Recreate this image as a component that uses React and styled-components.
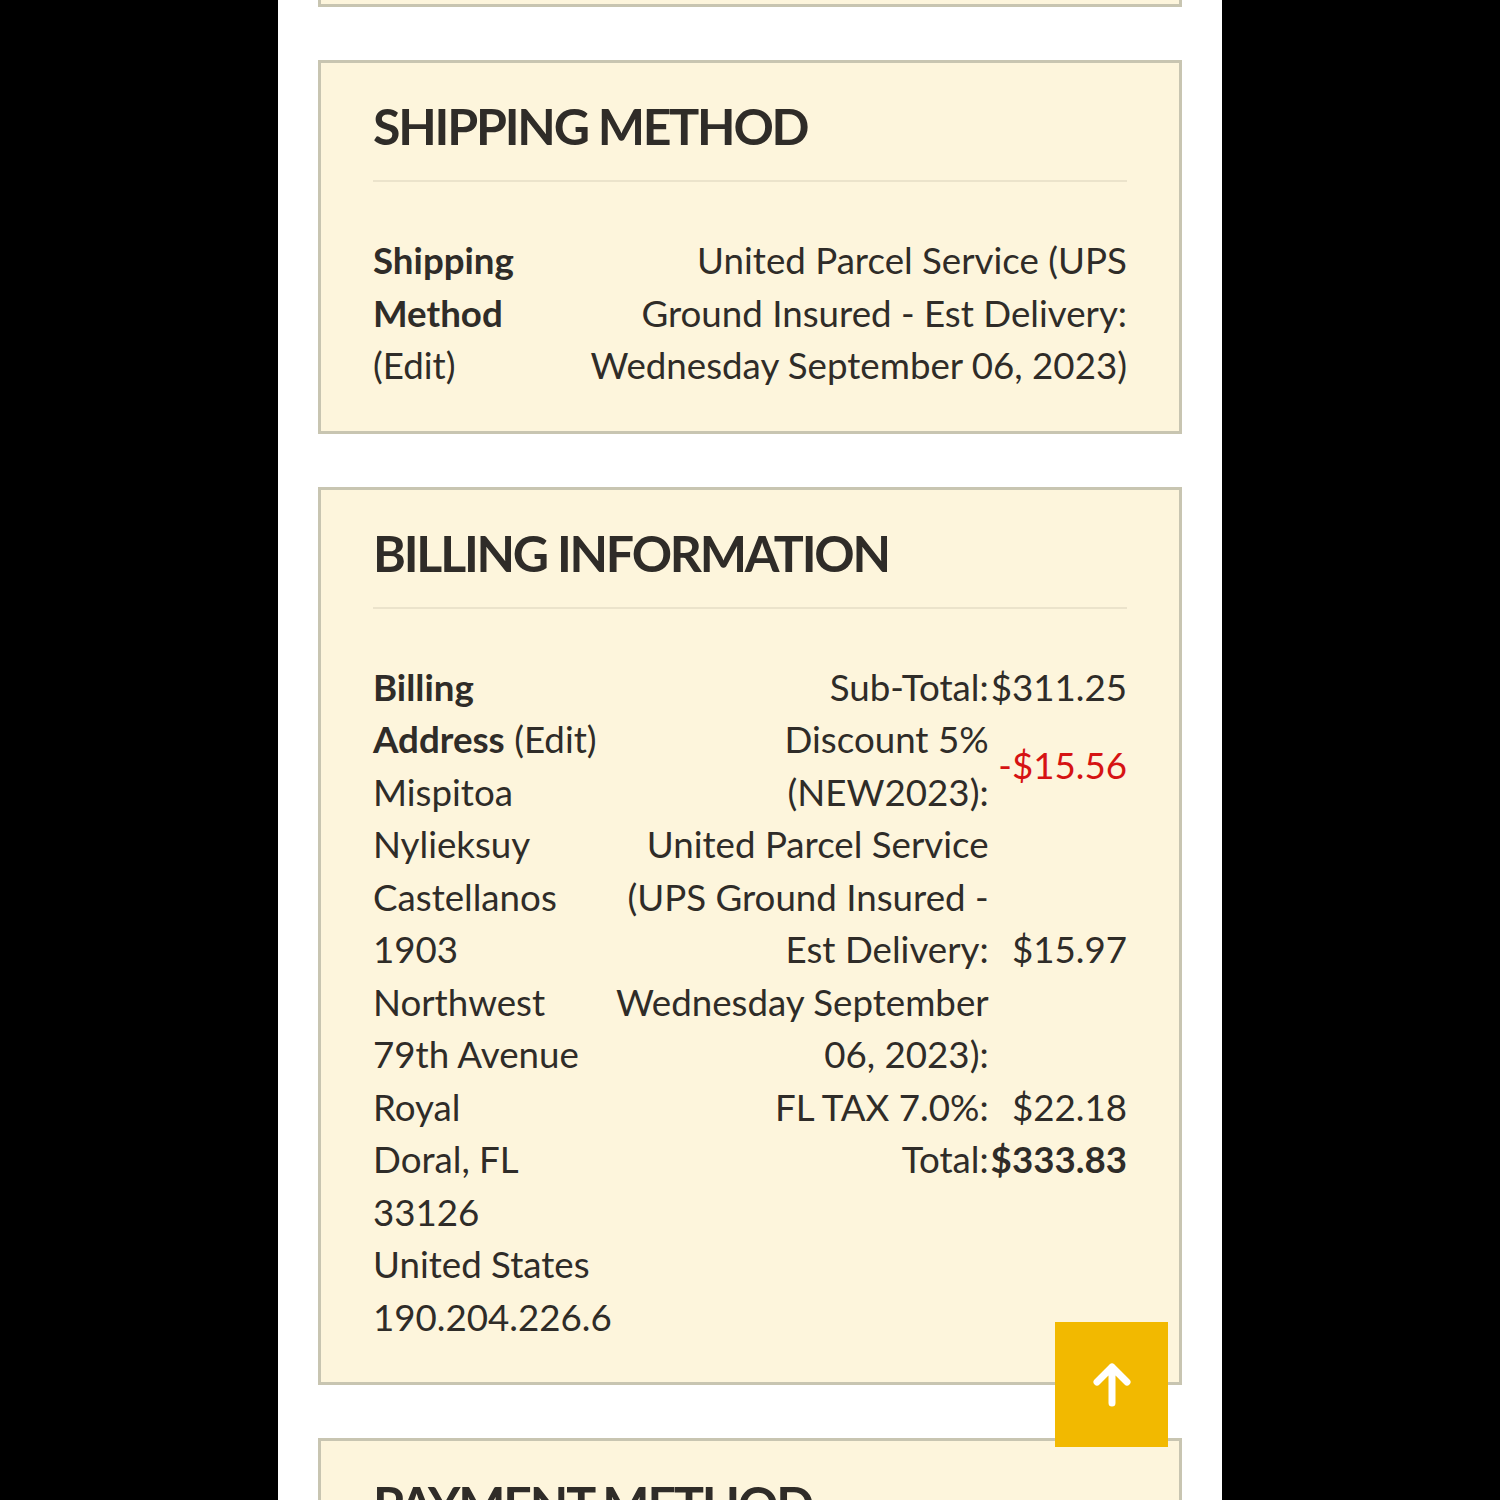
import React from "react";
import styled, { createGlobalStyle } from "styled-components";

const GlobalStyle = createGlobalStyle`
  html, body {
    margin: 0;
    padding: 0;
    background: #000;
  }
  body {
    font-family: Lato, "Open Sans", sans-serif;
    color: #2f2c28;
    overflow: hidden;
  }
`;

const Page = styled.div`
  width: 944px;
  height: 1500px;
  margin: 0 auto;
  background: #fff;
  overflow: hidden;
  display: flex;
  flex-direction: column;
  gap: 53px;
  padding: 0 40px;
  box-sizing: border-box;
`;

const Card = styled.section`
  flex-shrink: 0;
  background: #fdf5dc;
  border: 3px solid #c8c5b1;
  padding: 33px 52px 39px;
  box-sizing: border-box;
`;

const CardTail = styled(Card)`
  height: 7px;
  padding: 0;
  border-top: none;
`;

const Heading = styled.h2`
  margin: 0;
  font-size: 50px;
  line-height: 1.2;
  font-weight: 700;
  letter-spacing: -2.2px;
  text-transform: uppercase;
  padding-bottom: 24px;
  border-bottom: 2px solid #ebe3cb;
  margin-bottom: 52px;
`;

const Body = styled.div`
  font-size: 36.7px;
  line-height: 52.5px;
`;

const ShipRow = styled(Body)`
  display: grid;
  grid-template-columns: 210px 1fr;
`;

const Label = styled.span`
  font-weight: 700;
`;

const Value = styled.div`
  text-align: right;
`;

const BillRow = styled(Body)`
  display: grid;
  grid-template-columns: 237px 1fr;
`;

const Address = styled.div`
  display: flex;
  flex-direction: column;
`;

const Totals = styled.div`
  display: grid;
  grid-template-columns: 1fr auto;
  column-gap: 2px;
  align-content: start;
  align-items: center;
`;

const TotalLabel = styled.div`
  text-align: right;
`;

const TotalValue = styled.div`
  text-align: right;
  color: ${(p) => (p.$red ? "#d61313" : "inherit")};
  font-weight: ${(p) => (p.$bold ? 700 : 400)};
`;

const TopButton = styled.button`
  position: fixed;
  right: 332px;
  bottom: 53px;
  width: 113px;
  height: 125px;
  border: none;
  background: #f2b900;
  display: flex;
  align-items: center;
  justify-content: center;
  padding: 0;
  cursor: pointer;
`;

const totals = [
  { label: "Sub-Total:", value: "$311.25" },
  { label: "Discount 5% (NEW2023):", value: "-$15.56", red: true },
  {
    label:
      "United Parcel Service (UPS Ground Insured - Est Delivery: Wednesday September 06, 2023):",
    value: "$15.97",
  },
  { label: "FL TAX 7.0%:", value: "$22.18" },
  { label: "Total:", value: "$333.83", bold: true },
];

const address = [
  "Mispitoa Nylieksuy Castellanos",
  "1903 Northwest 79th Avenue",
  "Royal",
  "Doral, FL 33126",
  "United States",
  "190.204.226.6",
];

export default function App() {
  return (
    <>
      <GlobalStyle />
      <Page>
        <CardTail />
        <Card>
          <Heading>Shipping Method</Heading>
          <ShipRow>
            <div>
              <Label>Shipping Method</Label> (Edit)
            </div>
            <Value>
              United Parcel Service (UPS Ground Insured - Est Delivery:
              Wednesday September 06, 2023)
            </Value>
          </ShipRow>
        </Card>
        <Card>
          <Heading>Billing Information</Heading>
          <BillRow>
            <Address>
              <div>
                <Label>Billing Address</Label> (Edit)
              </div>
              {address.map((line) => (
                <div key={line}>{line}</div>
              ))}
            </Address>
            <Totals>
              {totals.map((t) => (
                <React.Fragment key={t.label}>
                  <TotalLabel>{t.label}</TotalLabel>
                  <TotalValue $red={t.red} $bold={t.bold}>
                    {t.value}
                  </TotalValue>
                </React.Fragment>
              ))}
            </Totals>
          </BillRow>
        </Card>
        <Card>
          <Heading>Payment Method</Heading>
        </Card>
      </Page>
      <TopButton aria-label="Back to top">
        <svg width="40" height="44" viewBox="0 0 40 44" fill="none">
          <path
            d="M5 19 L20 4 L35 19 M20 4 V40"
            stroke="#fff"
            strokeWidth="7"
            strokeLinecap="round"
            strokeLinejoin="round"
          />
        </svg>
      </TopButton>
    </>
  );
}
